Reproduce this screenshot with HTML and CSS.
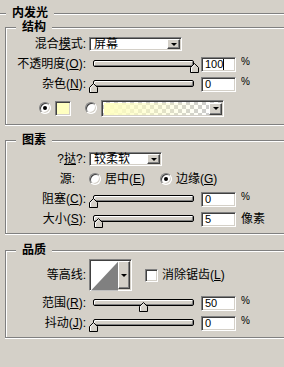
FILE: index.html
```html
<!DOCTYPE html>
<html lang="zh-CN">
<head>
<meta charset="UTF-8" />
<title>内发光</title>
<link rel="stylesheet" href="styles.css">
</head>
<body>
<section class="group outer">
  <h2 class="group-title">内发光</h2>

  <section class="group box-structure">
    <h3 class="group-title">结构</h3>
    <div class="row">
      <span class="lbl">混合<u>模</u>式:</span>
      <div class="select select-blend"><span class="select-text">屏幕</span><span class="btn"><i class="arrow"></i></span></div>
    </div>
    <div class="row">
      <span class="lbl">不透明度(<u>O</u>):</span>
      <div class="slider"><div class="track"></div><svg class="thumb" style="left:101px" width="9" height="10" viewBox="0 0 9 10"><polygon points="0.5,4.5 4.5,0.5 8.5,4.5 8.5,9.5 0.5,9.5" fill="#d4d0c8" stroke="#000"/><polyline points="1.5,9 1.5,4.9 4.5,1.9" fill="none" stroke="#fff"/></svg></div>
      <div class="field">100<span class="caret"></span></div>
      <span class="unit">%</span>
    </div>
    <div class="row">
      <span class="lbl">杂色(<u>N</u>):</span>
      <div class="slider"><div class="track"></div><svg class="thumb" style="left:0" width="9" height="10" viewBox="0 0 9 10"><polygon points="0.5,4.5 4.5,0.5 8.5,4.5 8.5,9.5 0.5,9.5" fill="#d4d0c8" stroke="#000"/><polyline points="1.5,9 1.5,4.9 4.5,1.9" fill="none" stroke="#fff"/></svg></div>
      <div class="field">0</div>
      <span class="unit">%</span>
    </div>
    <div class="row row-color">
      <span class="radio checked"></span>
      <span class="swatch"></span>
      <span class="radio"></span>
      <div class="gradient-pick"><span class="gradient"></span><span class="btn"><i class="arrow"></i></span></div>
    </div>
  </section>

  <section class="group box-elements">
    <h3 class="group-title">图素</h3>
    <div class="row">
      <span class="lbl">?<u>挞</u>?:</span>
      <div class="select select-tech"><span class="select-text">较柔软</span><span class="btn"><i class="arrow"></i></span></div>
    </div>
    <div class="row">
      <span class="lbl lbl-short">源:</span>
      <span class="radio"></span>
      <span class="opt">居中(<u>E</u>)</span>
      <span class="radio checked"></span>
      <span class="opt">边缘(<u>G</u>)</span>
    </div>
    <div class="row">
      <span class="lbl">阻塞(<u>C</u>):</span>
      <div class="slider"><div class="track"></div><svg class="thumb" style="left:0" width="9" height="10" viewBox="0 0 9 10"><polygon points="0.5,4.5 4.5,0.5 8.5,4.5 8.5,9.5 0.5,9.5" fill="#d4d0c8" stroke="#000"/><polyline points="1.5,9 1.5,4.9 4.5,1.9" fill="none" stroke="#fff"/></svg></div>
      <div class="field">0</div>
      <span class="unit">%</span>
    </div>
    <div class="row">
      <span class="lbl">大小(<u>S</u>):</span>
      <div class="slider"><div class="track"></div><svg class="thumb" style="left:5px" width="9" height="10" viewBox="0 0 9 10"><polygon points="0.5,4.5 4.5,0.5 8.5,4.5 8.5,9.5 0.5,9.5" fill="#d4d0c8" stroke="#000"/><polyline points="1.5,9 1.5,4.9 4.5,1.9" fill="none" stroke="#fff"/></svg></div>
      <div class="field">5</div>
      <span class="unit unit-px">像素</span>
    </div>
  </section>

  <section class="group box-quality">
    <h3 class="group-title">品质</h3>
    <div class="row row-contour">
      <span class="lbl">等高线:</span>
      <div class="contour">
        <svg class="contour-preview" width="28" height="30" viewBox="0 0 28 30"><rect width="28" height="30" fill="#fff"/><polygon points="0,30 28,0 28,30" fill="#808080"/></svg>
        <span class="btn"><i class="arrow"></i></span>
      </div>
      <span class="check"></span>
      <span class="opt">消除锯齿(<u>L</u>)</span>
    </div>
    <div class="row">
      <span class="lbl">范围(<u>R</u>):</span>
      <div class="slider"><div class="track"></div><svg class="thumb" style="left:50px" width="9" height="10" viewBox="0 0 9 10"><polygon points="0.5,4.5 4.5,0.5 8.5,4.5 8.5,9.5 0.5,9.5" fill="#d4d0c8" stroke="#000"/><polyline points="1.5,9 1.5,4.9 4.5,1.9" fill="none" stroke="#fff"/></svg></div>
      <div class="field">50</div>
      <span class="unit">%</span>
    </div>
    <div class="row">
      <span class="lbl">抖动(<u>J</u>):</span>
      <div class="slider"><div class="track"></div><svg class="thumb" style="left:0" width="9" height="10" viewBox="0 0 9 10"><polygon points="0.5,4.5 4.5,0.5 8.5,4.5 8.5,9.5 0.5,9.5" fill="#d4d0c8" stroke="#000"/><polyline points="1.5,9 1.5,4.9 4.5,1.9" fill="none" stroke="#fff"/></svg></div>
      <div class="field">0</div>
      <span class="unit">%</span>
    </div>
  </section>
</section>
</body>
</html>
```

FILE: styles.css
```css
* {
  box-sizing: border-box;
}
body {
  margin: 0;
  height: 367px;
  overflow: hidden;
  background: #d4d0c8;
  color: #000;
  font-family: "Liberation Sans", "Noto Sans CJK SC", sans-serif;
  font-size: 12px;
}
u {
  text-decoration-thickness: 1px;
  text-underline-offset: 1px;
}

/* group boxes (etched), right edge cut off by the window */
.group {
  border: 1px solid #808080;
  border-right: 0;
  box-shadow: inset 1px 1px #fff, 0 1px #fff;
  margin: 0 0 0 5px;
}
.outer {
  border-width: 1px 0 0;
  box-shadow: inset 0 1px #fff;
  margin: 13px 0 0;
}
.group-title {
  width: fit-content;
  height: 14px;
  margin: -8px 0 0 10px;
  padding: 0 6px;
  background: #d4d0c8;
  font-size: 12px;
  font-weight: bold;
  line-height: 14px;
}
.outer > .group-title {
  margin-left: 6px;
}
.box-structure {
  margin-top: 7px;
  padding-bottom: 6px;
}
.box-elements {
  margin-top: 15px;
  padding-bottom: 4px;
}
.box-elements > .group-title + .row {
  margin-top: 2px;
}
.box-quality {
  margin-top: 16px;
  padding-bottom: 4px;
}

/* rows */
.row {
  display: flex;
  align-items: center;
  height: 20px;
}
.lbl {
  width: 80px;
  margin-right: 3px;
  text-align: right;
  white-space: nowrap;
  line-height: 14px;
}
.lbl-short {
  padding-right: 11px;
}
.opt {
  margin-left: 4px;
  white-space: nowrap;
  line-height: 14px;
}
.unit {
  align-self: flex-start;
  margin: 3px 0 0 5px;
  font-size: 10px;
  line-height: 10px;
}
.unit-px {
  align-self: center;
  margin-top: 0;
  font-size: 12px;
  line-height: 14px;
}

/* sunken boxes */
.select,
.field,
.swatch,
.gradient-pick,
.contour,
.check {
  border: 1px solid;
  border-color: #808080 #fff #fff #808080;
  box-shadow: inset 1px 1px #404040, inset -1px -1px #d4d0c8;
  background: #fff;
}
.select {
  display: flex;
  height: 14px;
  padding: 1px;
}
.select-blend {
  width: 93px;
}
.select-tech {
  width: 73px;
}
.select-text {
  flex: 1;
  padding-left: 3px;
  line-height: 11px;
}
.btn {
  display: flex;
  align-items: center;
  justify-content: center;
  width: 13px;
  border: 1px solid;
  border-color: #fff #404040 #404040 #fff;
  box-shadow: inset -1px -1px #808080;
  background: #d4d0c8;
}
.arrow {
  border-left: 3px solid transparent;
  border-right: 3px solid transparent;
  border-top: 3px solid #000;
}

/* slider */
.slider {
  position: relative;
  width: 109px;
  height: 16px;
}
.track {
  height: 7px;
  margin: 4px 4px 0 4px;
  border: 1px solid #000;
  border-radius: 2px;
  box-shadow: inset 1px 1px #fff, inset -1px -1px #808080;
  background: #d4d0c8;
}
.thumb {
  position: absolute;
  top: 7px;
}

.field {
  width: 35px;
  height: 15px;
  margin-left: 3px;
  padding: 0 0 0 3px;
  display: flex;
  align-items: center;
  font-size: 11px;
  line-height: 11px;
}
.caret {
  width: 1px;
  height: 11px;
  background: #000;
}

/* radios and check */
.radio {
  position: relative;
  width: 12px;
  height: 12px;
  border: 1px solid;
  border-color: #808080 #fff #fff #808080;
  border-radius: 50%;
  box-shadow: inset 1px 1px #404040, inset -1px -1px #d4d0c8;
  background: #fff;
}
.radio.checked::after {
  content: "";
  position: absolute;
  top: 3px;
  left: 3px;
  width: 4px;
  height: 4px;
  border-radius: 50%;
  background: #000;
}
.box-elements .opt + .radio {
  margin-left: 15px;
}
.check {
  width: 13px;
  height: 13px;
  margin: 0 0 0 13px;
}

/* colour row */
.row-color {
  margin-top: 4px;
  padding-left: 33px;
}
.swatch {
  width: 16px;
  height: 15px;
  margin: 0 14px 0 4px;
  background: #ffffc0;
}
.gradient-pick {
  display: flex;
  width: 123px;
  height: 17px;
  margin-left: 4px;
  padding: 2px 1px 1px 2px;
  background-color: #fff;
  background-image:
    linear-gradient(45deg, #ccc 25%, transparent 25%, transparent 75%, #ccc 75%),
    linear-gradient(45deg, #ccc 25%, transparent 25%, transparent 75%, #ccc 75%);
  background-size: 8px 8px;
  background-position: 0 0, 4px 4px;
}
.gradient {
  flex: 1;
  background: linear-gradient(90deg, #ffffc0, rgba(255, 255, 192, 0));
}

/* contour */
.row-contour {
  height: 36px;
}
.contour {
  display: flex;
  width: 43px;
  height: 32px;
  padding: 1px;
}
.contour-preview {
  display: block;
}
.contour .btn {
  width: 12px;
}
```
